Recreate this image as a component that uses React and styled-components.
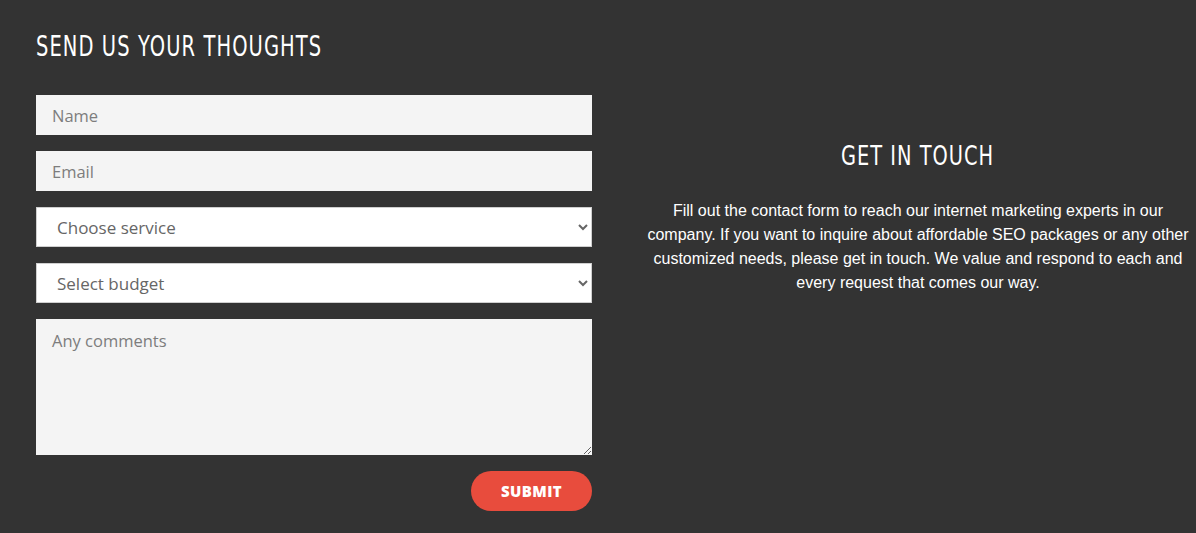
import React from "react";
import styled, { createGlobalStyle } from "styled-components";

const Global = createGlobalStyle`
  html, body { margin: 0; padding: 0; background: #333333; }
  body { font-family: "Liberation Sans", Arial, sans-serif; }
  * { box-sizing: border-box; }
`;

const Page = styled.div`
  display: grid;
  grid-template-columns: 556px 556px;
  column-gap: 48px;
  padding: 28px 0 22px 36px;
  min-height: 533px;
`;

const Column = styled.section`
  display: flex;
  flex-direction: column;
  align-items: ${(p) => (p.$center ? "center" : "stretch")};
  text-align: ${(p) => (p.$center ? "center" : "left")};
  padding-top: ${(p) => p.$top || 0}px;
`;

const Heading = styled.h2`
  margin: 0;
  align-self: ${(p) => (p.$center ? "center" : "flex-start")};
  display: inline-block;
  font-family: "DejaVu Sans", "Liberation Sans", sans-serif;
  font-weight: 400;
  font-size: ${(p) => p.$size}px;
  line-height: 36px;
  letter-spacing: ${(p) => p.$spacing}px;
  color: #ffffff;
  text-transform: uppercase;
  white-space: nowrap;
  transform: scaleX(${(p) => p.$squeeze});
  transform-origin: ${(p) => (p.$center ? "center" : "left")} center;
`;

const Form = styled.form`
  display: flex;
  flex-direction: column;
  gap: 16px;
  margin-top: 31px;
`;

const fieldFont = `
  font-family: "Open Sans", "DejaVu Sans", sans-serif;
  font-size: 16.5px;
`;

const Input = styled.input`
  ${fieldFont}
  height: 40px;
  width: 100%;
  border: none;
  outline: none;
  background: #f4f4f4;
  padding: 0 16px;
  color: #444;
  &::placeholder { color: #7d7d7d; }
`;

const Select = styled.select`
  ${fieldFont}
  font-size: 17px;
  height: 40px;
  width: 100%;
  border: 1px solid #cfcfcf;
  background: #ffffff;
  color: #666666;
  padding: 0 16px;
  outline: none;
`;

const TextArea = styled.textarea`
  ${fieldFont}
  height: 136px;
  width: 100%;
  border: none;
  outline: none;
  background: #f4f4f4;
  padding: 10px 16px;
  color: #444;
  resize: vertical;
  &::placeholder { color: #7d7d7d; }
`;

const Actions = styled.div`
  display: flex;
  justify-content: flex-end;
`;

const Submit = styled.button`
  font-family: "Open Sans", "DejaVu Sans", sans-serif;
  font-weight: 800;
  font-size: 15px;
  letter-spacing: 0.4px;
  color: #ffffff;
  background: #e84c3d;
  border: none;
  border-radius: 20px;
  height: 40px;
  width: 121px;
  text-transform: uppercase;
  cursor: pointer;
`;

const Text = styled.p`
  margin: 25px 0 0;
  font-family: "Liberation Sans", Arial, sans-serif;
  font-size: 16px;
  line-height: 24px;
  color: #ffffff;
`;

export default function App() {
  return (
    <>
      <Global />
      <Page>
        <Column>
          <Heading $size={29} $spacing={1.6} $squeeze={0.672}>
            Send us your thoughts
          </Heading>
          <Form onSubmit={(e) => e.preventDefault()}>
            <Input type="text" placeholder="Name" />
            <Input type="email" placeholder="Email" />
            <Select defaultValue="">
              <option value="">Choose service</option>
              <option>SEO</option>
              <option>PPC</option>
            </Select>
            <Select defaultValue="">
              <option value="">Select budget</option>
              <option>$500</option>
              <option>$1000</option>
            </Select>
            <TextArea placeholder="Any comments" />
            <Actions>
              <Submit type="submit">Submit</Submit>
            </Actions>
          </Form>
        </Column>
        <Column $center $top={110}>
          <Heading $center $size={27} $spacing={1.4} $squeeze={0.718}>
            Get in touch
          </Heading>
          <Text>
            Fill out the contact form to reach our internet marketing experts in our
            company. If you want to inquire about affordable SEO packages or any other
            customized needs, please get in touch. We value and respond to each and
            every request that comes our way.
          </Text>
        </Column>
      </Page>
    </>
  );
}
